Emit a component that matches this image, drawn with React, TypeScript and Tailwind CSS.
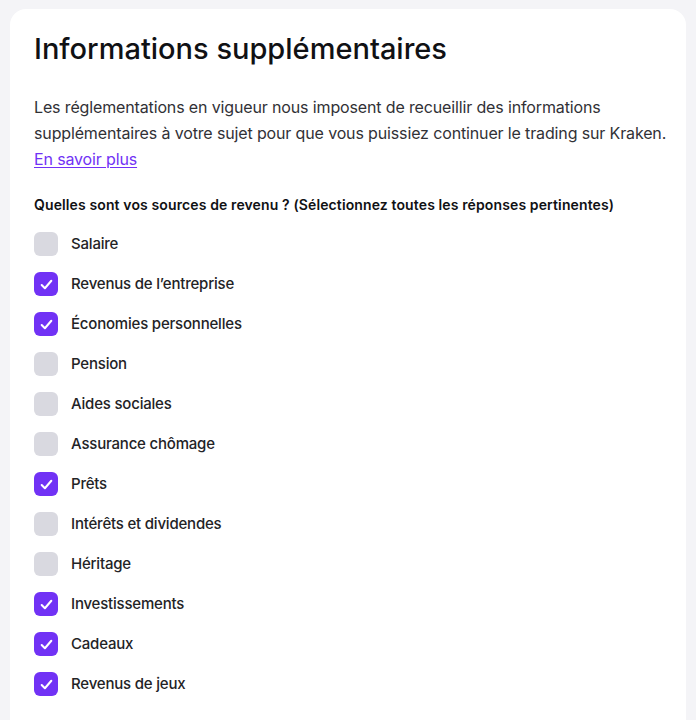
import React, { useState } from "react";

const sources = [
  { label: "Salaire", checked: false },
  { label: "Revenus de l’entreprise", checked: true },
  { label: "Économies personnelles", checked: true },
  { label: "Pension", checked: false },
  { label: "Aides sociales", checked: false },
  { label: "Assurance chômage", checked: false },
  { label: "Prêts", checked: true },
  { label: "Intérêts et dividendes", checked: false },
  { label: "Héritage", checked: false },
  { label: "Investissements", checked: true },
  { label: "Cadeaux", checked: true },
  { label: "Revenus de jeux", checked: true },
];

const CheckIcon = () => (
  <svg width="15" height="15" viewBox="0 0 14 14" fill="none">
    <path
      d="M2.5 7.5L5.5 10.5L11.5 3.5"
      stroke="white"
      strokeWidth="1.9"
      strokeLinecap="round"
      strokeLinejoin="round"
    />
  </svg>
);

const App = () => {
  const [values, setValues] = useState(sources.map((s) => s.checked));

  const toggle = (index: number) => {
    setValues((prev) => prev.map((v, i) => (i === index ? !v : v)));
  };

  return (
    <div
      className="min-h-screen bg-[#f4f4f7] px-[10px] pt-[9px]"
      style={{ fontFamily: "Inter, 'Noto Sans', sans-serif" }}
    >
      <div className="min-h-[711px] rounded-t-2xl bg-white pl-6 pr-4 pt-[22px] pb-6">
        <h1 className="text-[29px] leading-9 font-medium text-[#101114]">
          Informations supplémentaires
        </h1>
        <p className="mt-[27px] text-[16px] leading-[26px] tracking-[-0.14px] text-[#313136]">
          Les réglementations en vigueur nous imposent de recueillir des informations
          <br />
          supplémentaires à votre sujet pour que vous puissiez continuer le trading sur Kraken.
          <br />
          <a href="#" className="text-[#7132f5] underline underline-offset-2">
            En savoir plus
          </a>
        </p>
        <p className="mt-[23px] text-[14px] leading-5 font-semibold tracking-[0.12px] text-[#101114]">
          Quelles sont vos sources de revenu ? (Sélectionnez toutes les réponses pertinentes)
        </p>
        <div className="mt-[17px] flex flex-col gap-4">
          {sources.map((s, index) => (
            <label key={s.label} className="flex h-6 cursor-pointer items-center gap-[13px]">
              <button
                type="button"
                onClick={() => toggle(index)}
                className={`flex h-6 w-6 items-center justify-center rounded-md ${
                  values[index] ? "bg-[#7132f5]" : "bg-[#d9d9e0]"
                }`}
              >
                {values[index] && <CheckIcon />}
              </button>
              <span className="text-[15px] font-medium tracking-[-0.2px] text-[#232326]">
                {s.label}
              </span>
            </label>
          ))}
        </div>
      </div>
    </div>
  );
};

export default App;
